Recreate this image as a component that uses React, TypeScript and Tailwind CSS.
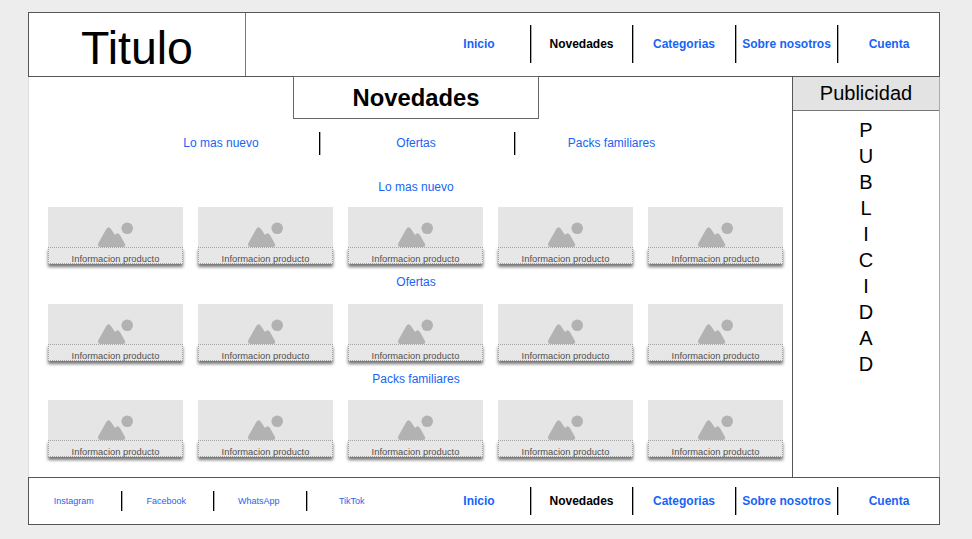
const sections = [
  { title: "Lo mas nuevo", height: "h-[95px]", gap: "mt-[13px]" },
  { title: "Ofertas", height: "h-[97px]", gap: "mt-[15px]" },
  { title: "Packs familiares", height: "h-[96px]", gap: "mt-[13.5px]" },
];
const menu = ["Inicio", "Novedades", "Categorias", "Sobre nosotros", "Cuenta"];
const filters = ["Lo mas nuevo", "Ofertas", "Packs familiares"];
const social = ["Instagram", "Facebook", "WhatsApp", "TikTok"];

function Divider({ className }: { className: string }) {
  return <i className={`w-px shrink-0 bg-black shadow-[1px_0_0_#aaa] ${className}`} />;
}

function Menu({ divider }: { divider: string }) {
  return (
    <nav className="-mr-px flex w-[512px] items-center text-[12px] font-bold leading-[14px] text-[#1764f5]">
      {menu.map((item, i) => (
        <div key={item} className={`flex items-center ${i === 0 || i === 2 ? "w-[103px]" : "w-[102px]"}`}>
          <a className={`flex-1 text-center whitespace-nowrap ${item === "Novedades" ? "text-black" : ""}`}>{item}</a>
          {i < menu.length - 1 && <Divider className={divider} />}
        </div>
      ))}
    </nav>
  );
}

function ProductCard() {
  return (
    <article className="flex h-[57px] w-[135px] flex-col">
      <div className="flex h-[40px] items-end bg-[#e5e5e5] pl-[50px]">
        <svg width="36" height="25" viewBox="0 0 36 25" fill="#b2b2b2">
          <path d="M3 25Q-1 25 .4 21L8.3 7Q10.5 3.5 13 7L17 13Q19.5 9.5 22 13L27 22Q28 25 25 25Z" />
          <circle cx="29.2" cy="6.3" r="5.8" />
        </svg>
      </div>
      <div className="h-[17px] border border-dotted border-[#a3a3a3] bg-[#e7e7e7] pt-[5px] text-center text-[9.35px] leading-[12px] whitespace-nowrap text-[#505050] shadow-[0_3px_3px_0_#777]">
        Informacion producto
      </div>
    </article>
  );
}

export default function App() {
  return (
    <div className="h-[539px] w-[972px] bg-[#ededed] pt-3 pl-7 font-['Liberation_Sans',Arial,sans-serif]">
      <div className="flex h-[513px] w-[912px] flex-col bg-white">
        <header className="flex h-[65px] justify-between border border-[#555]">
          <h1 className="w-[217px] border-r border-[#777] pt-[7px] text-center text-[46.5px] leading-[56px] text-black">Titulo</h1>
          <div className="-mt-px flex">
            <Menu divider="h-[38px]" />
          </div>
        </header>
        <div className="flex h-[400px]">
          <main className="flex w-[764px] flex-col border-l border-[#ddd]">
            <h2 className="-mt-px ml-[264px] h-[43px] w-[246px] border border-[#666] pt-[7px] text-center text-[23.8px] leading-[28px] font-bold text-black">Novedades</h2>
            <nav className="mt-[12px] ml-[95px] flex h-6 w-[585px] items-center text-[12px] leading-[14px] text-[#1764f5]">
              {filters.map((item, i) => (
                <div key={item} className="flex flex-1 items-center">
                  <a className="flex-1 text-center">{item}</a>
                  {i < 2 && <Divider className="-mr-px ml-px h-[23px]" />}
                </div>
              ))}
            </nav>
            <div className="mt-[25px]">
              {sections.map((section) => (
                <section key={section.title} className={section.height}>
                  <h3 className="ml-[19px] w-[736px] text-center text-[12px] leading-[14px] text-[#1764f5]">{section.title}</h3>
                  <div className={`ml-[19px] flex w-[735px] justify-between ${section.gap}`}>
                    {[0, 1, 2, 3, 4].map((n) => <ProductCard key={n} />)}
                  </div>
                </section>
              ))}
            </div>
          </main>
          <aside className="w-[148px] border-r border-l border-r-[#aaa] border-l-[#555] text-[20px] text-black">
            <h2 className="-mt-px h-[35px] border-t border-b border-t-[#555] border-b-[#777] bg-[#e3e3e3] pt-[4px] text-center leading-[24px]">Publicidad</h2>
            <div className="mt-[6px] flex flex-col items-center leading-[26px]">
              {"PUBLICIDAD".split("").map((letter, i) => <span key={i}>{letter}</span>)}
            </div>
          </aside>
        </div>
        <footer className="flex h-[48px] justify-between border border-[#555]">
          <nav className="-ml-px flex w-[370px] items-center text-[9px] leading-[12px] text-[#2863ea]">
            {social.map((item, i) => (
              <div key={item} className="flex flex-1 items-center">
                <a className="flex-1 text-center">{item}</a>
                {i < 3 && <Divider className="-mr-px ml-px h-5" />}
              </div>
            ))}
          </nav>
          <Menu divider="h-7" />
        </footer>
      </div>
    </div>
  );
}
